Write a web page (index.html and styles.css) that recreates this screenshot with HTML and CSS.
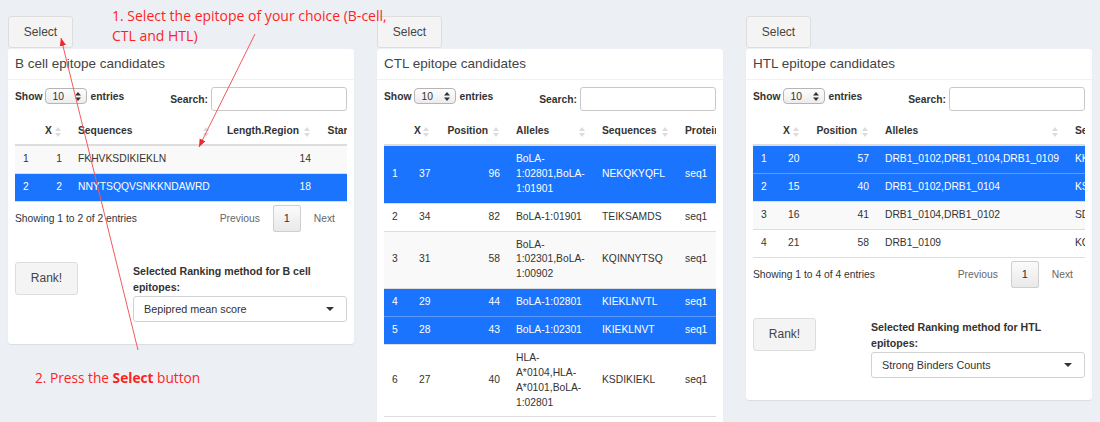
FILE: index.html
```html
<!DOCTYPE html>
<html lang="en">
<head>
<meta charset="utf-8">
<title>Epitope candidates</title>
<link rel="stylesheet" href="styles.css">
</head>
<body>
<div class="page">
  <svg class="arrows" width="1100" height="422" viewBox="0 0 1100 422">
    <defs>
      <marker id="ah" markerWidth="9" markerHeight="8" refX="8" refY="4" orient="auto" markerUnits="userSpaceOnUse">
        <path d="M0,0.8 L8,4 L0,7.2 z" fill="#f0282d"/>
      </marker>
    </defs>
    <line x1="138" y1="350" x2="61" y2="38" stroke="#f4595c" stroke-width="1" marker-end="url(#ah)"/>
    <line x1="255" y1="34" x2="199" y2="147" stroke="#f4595c" stroke-width="1" marker-end="url(#ah)"/>
  </svg>
  <div class="note note-top">1. Select the epitope of your choice (B-cell,<br>CTL and HTL)</div>

  <section class="col">
    <button class="btn btn-select">Select</button>
    <div class="box">
      <div class="box-header"><h3 class="box-title">B cell epitope candidates</h3></div>
      <div class="box-body">
        <div class="dt-top">
          <div class="dt-length"><b>Show</b><span class="len-select">10<svg class="updown" width="6" height="9" viewBox="0 0 6 9"><path d="M0 3.5L3 0L6 3.5Z M0 5.5L3 9L6 5.5Z" fill="#333"/></svg></span><b>entries</b></div>
          <div class="dt-search"><b>Search:</b><span class="search-input"></span></div>
        </div>
        <div class="dt-scroll">
          <table class="dt dt-b">
            <colgroup><col style="width:22px"><col style="width:33px"><col style="width:148px"><col style="width:101px"><col style="width:52px"></colgroup>
            <thead><tr><th></th><th class="r">X<i class="sort"></i></th><th>Sequences<i class="sort"></i></th><th class="r">Length.Region<i class="sort"></i></th><th class="r">Start<i class="sort"></i></th></tr></thead>
            <tbody>
              <tr class="odd"><td>1</td><td class="r">1</td><td>FKHVKSDIKIEKLN</td><td class="r">14</td><td class="r"></td></tr>
              <tr class="sel"><td>2</td><td class="r">2</td><td>NNYTSQQVSNKKNDAWRD</td><td class="r">18</td><td class="r"></td></tr>
            </tbody>
          </table>
        </div>
        <div class="dt-bottom">
          <span class="dt-info">Showing 1 to 2 of 2 entries</span>
          <div class="pager"><span class="pg">Previous</span><span class="pg-cur">1</span><span class="pg">Next</span></div>
        </div>
        <div class="rank-row">
          <button class="btn btn-rank">Rank!</button>
          <div class="rank-field">
            <label class="rank-label">Selected Ranking method for B cell epitopes:</label>
            <div class="dropdown">Bepipred mean score<i class="caret"></i></div>
          </div>
        </div>
      </div>
    </div>
    <div class="note note-bottom">2. Press the <b>Select</b> button</div>
  </section>

  <section class="col">
    <button class="btn btn-select">Select</button>
    <div class="box box-tall">
      <div class="box-header"><h3 class="box-title">CTL epitope candidates</h3></div>
      <div class="box-body">
        <div class="dt-top">
          <div class="dt-length"><b>Show</b><span class="len-select">10<svg class="updown" width="6" height="9" viewBox="0 0 6 9"><path d="M0 3.5L3 0L6 3.5Z M0 5.5L3 9L6 5.5Z" fill="#333"/></svg></span><b>entries</b></div>
          <div class="dt-search"><b>Search:</b><span class="search-input"></span></div>
        </div>
        <div class="dt-scroll">
          <table class="dt dt-ctl">
            <colgroup><col style="width:22px"><col style="width:32px"><col style="width:70px"><col style="width:86px"><col style="width:83px"><col style="width:83px"></colgroup>
            <thead><tr><th></th><th class="r">X<i class="sort"></i></th><th class="r">Position<i class="sort"></i></th><th>Alleles<i class="sort"></i></th><th>Sequences<i class="sort"></i></th><th>Protein<i class="sort"></i></th></tr></thead>
            <tbody>
              <tr class="sel"><td>1</td><td class="l">37</td><td class="r">96</td><td>BoLA-<br>1:02801,BoLA-<br>1:01901</td><td>NEKQKYQFL</td><td>seq1</td></tr>
              <tr><td>2</td><td class="l">34</td><td class="r">82</td><td>BoLA-1:01901</td><td>TEIKSAMDS</td><td>seq1</td></tr>
              <tr class="odd"><td>3</td><td class="l">31</td><td class="r">58</td><td>BoLA-<br>1:02301,BoLA-<br>1:00902</td><td>KQINNYTSQ</td><td>seq1</td></tr>
              <tr class="sel"><td>4</td><td class="l">29</td><td class="r">44</td><td>BoLA-1:02801</td><td>KIEKLNVTL</td><td>seq1</td></tr>
              <tr class="sel"><td>5</td><td class="l">28</td><td class="r">43</td><td>BoLA-1:02301</td><td>IKIEKLNVT</td><td>seq1</td></tr>
              <tr><td>6</td><td class="l">27</td><td class="r">40</td><td>HLA-<br>A*0104,HLA-<br>A*0101,BoLA-<br>1:02801</td><td>KSDIKIEKL</td><td>seq1</td></tr>
            </tbody>
          </table>
        </div>
      </div>
    </div>
  </section>

  <section class="col">
    <button class="btn btn-select">Select</button>
    <div class="box">
      <div class="box-header"><h3 class="box-title">HTL epitope candidates</h3></div>
      <div class="box-body">
        <div class="dt-top">
          <div class="dt-length"><b>Show</b><span class="len-select">10<svg class="updown" width="6" height="9" viewBox="0 0 6 9"><path d="M0 3.5L3 0L6 3.5Z M0 5.5L3 9L6 5.5Z" fill="#333"/></svg></span><b>entries</b></div>
          <div class="dt-search"><b>Search:</b><span class="search-input"></span></div>
        </div>
        <div class="dt-scroll">
          <table class="dt dt-htl">
            <colgroup><col style="width:22px"><col style="width:33px"><col style="width:69px"><col style="width:190px"><col style="width:90px"></colgroup>
            <thead><tr><th></th><th class="r">X<i class="sort"></i></th><th class="r">Position<i class="sort"></i></th><th>Alleles<i class="sort"></i></th><th>Sequences<i class="sort"></i></th></tr></thead>
            <tbody>
              <tr class="sel"><td>1</td><td class="l">20</td><td class="r">57</td><td>DRB1_0102,DRB1_0104,DRB1_0109</td><td>KKLNVTLKN</td></tr>
              <tr class="sel"><td>2</td><td class="l">15</td><td class="r">40</td><td>DRB1_0102,DRB1_0104</td><td>KSDIKIEKL</td></tr>
              <tr class="odd"><td>3</td><td class="l">16</td><td class="r">41</td><td>DRB1_0104,DRB1_0102</td><td>SDIKIEKLN</td></tr>
              <tr><td>4</td><td class="l">21</td><td class="r">58</td><td>DRB1_0109</td><td>KQYQFLEKS</td></tr>
            </tbody>
          </table>
        </div>
        <div class="dt-bottom">
          <span class="dt-info">Showing 1 to 4 of 4 entries</span>
          <div class="pager"><span class="pg">Previous</span><span class="pg-cur">1</span><span class="pg">Next</span></div>
        </div>
        <div class="rank-row">
          <button class="btn btn-rank">Rank!</button>
          <div class="rank-field">
            <label class="rank-label">Selected Ranking method for HTL epitopes:</label>
            <div class="dropdown">Strong Binders Counts<i class="caret"></i></div>
          </div>
        </div>
      </div>
    </div>
  </section>
</div>
</body>
</html>
```
FILE: styles.css
```css
* { box-sizing: border-box; }

html, body {
  margin: 0;
  height: 422px;
  overflow: hidden;
}

body {
  background: #ecf0f5;
  font-family: "Liberation Sans", Arial, Helvetica, sans-serif;
  font-size: 10.3px;
  color: #333;
}

.page {
  position: relative;
  display: flex;
  align-items: flex-start;
  gap: 23px;
  padding: 16px 8px 0;
  height: 422px;
  overflow: hidden;
}

.arrows {
  position: absolute;
  left: 0;
  top: 0;
  z-index: 10;
  pointer-events: none;
}

.note {
  font-family: "Open Sans", "Noto Sans", sans-serif;
  color: #ff1f1f;
  line-height: 20px;
}

.note-top {
  position: absolute;
  left: 112px;
  top: 6px;
  z-index: 5;
  font-size: 14px;
}

.note-bottom {
  margin-top: 24px;
  padding-left: 27px;
  font-size: 13.7px;
}

.col {
  width: 346px;
  flex: none;
  display: flex;
  flex-direction: column;
}

.btn {
  font-family: "Liberation Sans", Arial, sans-serif;
  font-size: 12px;
  color: #444;
  background: #f4f4f4;
  border: 1px solid #ddd;
  border-radius: 3px;
  padding: 0;
}

.btn-select {
  width: 65px;
  height: 32px;
  margin-bottom: 1px;
}

.box {
  background: #fff;
  border-radius: 3px;
  box-shadow: 0 1px 1px rgba(0, 0, 0, 0.08);
}

.box-tall {
  height: 380px;
  overflow: hidden;
}

.box-header {
  height: 31px;
  border-bottom: 1px solid #f1f1f1;
  padding: 0 7px;
}

.box-title {
  margin: 0;
  font-weight: normal;
  font-size: 13.5px;
  line-height: 30px;
  color: #444;
}

.box-body {
  padding: 7px 7px 22px;
}

.dt-top {
  display: flex;
  justify-content: space-between;
  align-items: flex-start;
  height: 24px;
}

.dt-length {
  display: flex;
  align-items: center;
  gap: 3px;
  margin-top: 1px;
}

.len-select {
  display: inline-flex;
  align-items: center;
  justify-content: space-between;
  width: 42px;
  height: 16px;
  padding: 0 5px 0 6px;
  border: 1px solid #b5b5b5;
  border-radius: 4px;
  background: linear-gradient(#fdfdfd, #ececec);
  font-size: 10.3px;
}

.dt-search {
  display: flex;
  align-items: center;
  gap: 3px;
}

.dt-search b {
  margin-top: 1px;
}

.search-input {
  display: block;
  width: 136px;
  height: 24px;
  border: 1px solid #c9c9c9;
  border-radius: 3px;
  background: #fff;
}

.dt-scroll {
  width: 332px;
  overflow: hidden;
  margin-top: 6px;
}

.dt {
  table-layout: fixed;
  border-collapse: collapse;
}

.dt-b { width: 356px; }
.dt-ctl { width: 376px; }
.dt-htl { width: 404px; }

.dt th {
  position: relative;
  text-align: left;
  font-weight: bold;
  line-height: 14px;
  padding: 7px 20px 6px 8px;
  border-bottom: 2px solid #ddd;
  white-space: nowrap;
  overflow: hidden;
}

.dt th.r { text-align: right; }

.sort {
  position: absolute;
  right: 9px;
  top: 10px;
  width: 6px;
  height: 10px;
}

.sort::before,
.sort::after {
  content: "";
  position: absolute;
  left: 0;
  border-left: 3px solid transparent;
  border-right: 3px solid transparent;
}

.sort::before {
  top: 0;
  border-bottom: 4px solid #dcdcdc;
}

.sort::after {
  bottom: 0;
  border-top: 4px solid #dcdcdc;
}

.dt td {
  line-height: 14.8px;
  padding: 6.1px 8px;
  border-top: 1px solid #ddd;
  white-space: nowrap;
  overflow: hidden;
  vertical-align: middle;
}

.dt td.r { text-align: right; }
.dt td.l { padding-left: 13px; }

.dt tr.odd td { background: #f9f9f9; }

.dt tr.sel td {
  background: #1b74fd;
  color: #fff;
}

.dt tr.sel + tr.sel td { border-top-color: #5c9bfb; }

.dt tbody tr:last-child td { border-bottom: 1px solid #ddd; }

.dt-bottom {
  display: flex;
  justify-content: space-between;
  align-items: center;
  margin-top: 3px;
  height: 27px;
}

.pager {
  display: flex;
  align-items: center;
  color: #666;
}

.pg {
  padding: 0 12px;
}

.pg-cur {
  display: flex;
  align-items: center;
  justify-content: center;
  width: 28px;
  height: 27px;
  margin: 0 1px;
  border: 1px solid #cfcfcf;
  border-radius: 2px;
  background: linear-gradient(#fbfbfb, #e9e9e9);
  color: #333;
  font-size: 11px;
}

.rank-row {
  display: grid;
  grid-template-columns: 118px 1fr;
  margin-top: 30px;
}

.btn-rank {
  width: 63px;
  height: 33px;
}

.rank-label {
  display: block;
  font-weight: bold;
  font-size: 10.6px;
  line-height: 16px;
  margin-top: 1px;
  padding-right: 26px;
}

.dropdown {
  position: relative;
  height: 26px;
  margin-top: 1px;
  border: 1px solid #d2d2d2;
  border-radius: 3px;
  padding: 0 10px;
  line-height: 24px;
  font-size: 10.8px;
  color: #333;
  background: #fff;
}

.caret {
  position: absolute;
  right: 12px;
  top: 10px;
  border-left: 4px solid transparent;
  border-right: 4px solid transparent;
  border-top: 4px solid #333;
}
```
